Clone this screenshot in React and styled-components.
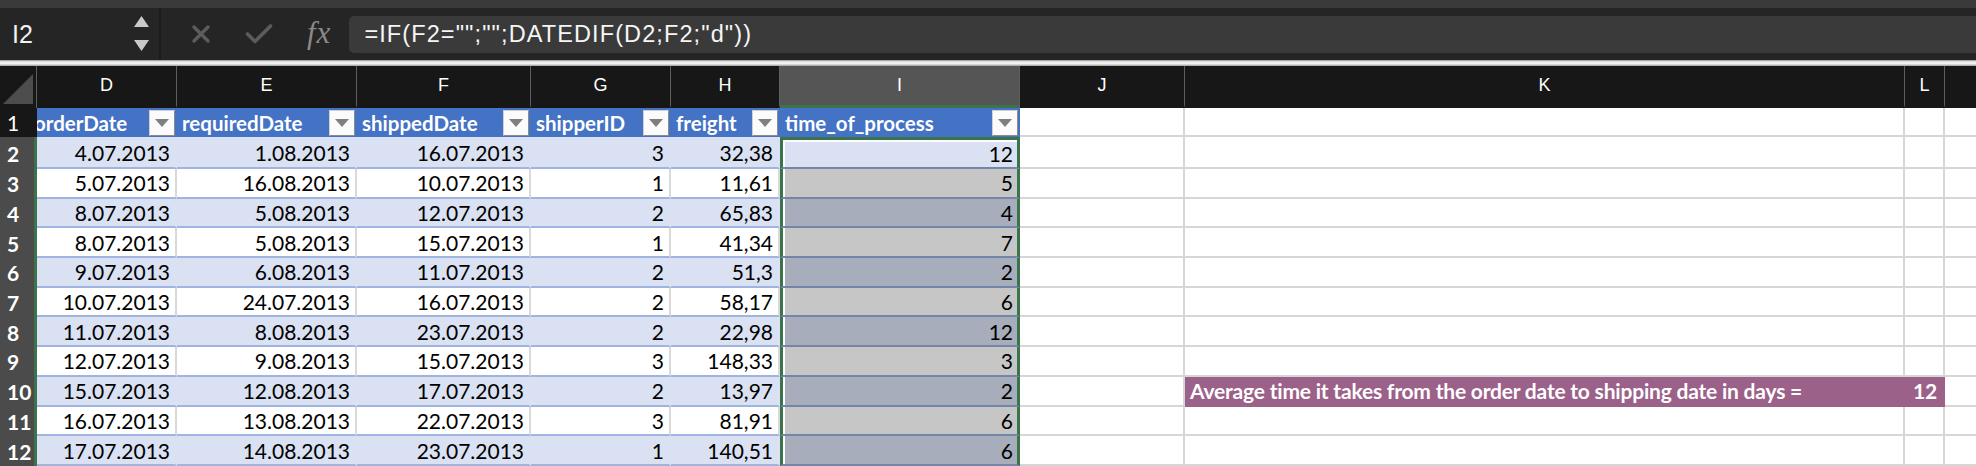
import React from 'react';
import styled, { createGlobalStyle } from 'styled-components';

const GlobalStyle = createGlobalStyle`
    html, body {
        margin: 0;
        padding: 0;
        background: #ffffff;
        overflow: hidden;
    }
`;

const COLUMNS = '37px 140px 180px 174px 140px 109px 240px 165px 720px 40px 120px';
const GREEN = '#3b744a';

const Window = styled.div`
    width: 1976px;
    height: 466px;
    overflow: hidden;
    font-family: Lato, "Open Sans", sans-serif;
`;

const Toolbar = styled.div`
    display: flex;
    align-items: stretch;
    height: 52px;
    background: #252525;
    border-top: 8px solid #3a3a3a;
`;

const NameBox = styled.div`
    display: flex;
    align-items: center;
    justify-content: space-between;
    width: 161px;
    padding: 0 10px 0 12px;
    box-sizing: border-box;
    border-right: 2px solid #1b1b1b;
    color: #f2f2f2;
    font-family: "Liberation Sans", Arial, sans-serif;
    font-size: 25px;
`;

const Actions = styled.div`
    display: flex;
    align-items: center;
    gap: 34px;
    padding: 0 18px 0 30px;
`;

const Fx = styled.span`
    font-family: "Liberation Serif", "Times New Roman", serif;
    font-style: italic;
    font-size: 31px;
    color: #8a8a8a;
    letter-spacing: 1px;
    margin-top: -3px;
`;

const FormulaInput = styled.div`
    flex: 1;
    display: flex;
    align-items: center;
    margin: 8px 0 7px 0;
    padding-left: 15px;
    background: #3a3a3a;
    border-radius: 5px 0 0 5px;
    color: #f6f6f6;
    font-family: "Liberation Sans", Arial, sans-serif;
    font-size: 23.5px;
    letter-spacing: 1.1px;
    white-space: pre;
`;

const Divider = styled.div`
    height: 6px;
    background: linear-gradient(#8c8c8c, #dcdcdc 25%, #fbfbfb 50%, #d6d6d6 75%, #9a9a9a);
`;

const Row = styled.div`
    display: grid;
    grid-template-columns: ${COLUMNS};
    height: ${p => p.$h}px;
`;

const Corner = styled.div`
    background: #171717;
    border-right: 1px solid #5e5e5e;
    display: flex;
    align-items: flex-end;
    justify-content: flex-end;
    padding: 0 3px 4px 0;
`;

const ColLetter = styled.div`
    display: flex;
    align-items: center;
    justify-content: center;
    background: ${p => (p.$active ? '#555555' : '#171717')};
    border-right: 1px solid #5e5e5e;
    border-bottom: 3px solid ${p => (p.$active ? GREEN : '#171717')};
    color: #ffffff;
    font-family: "Liberation Sans", Arial, sans-serif;
    font-size: 18px;
`;

const RowNum = styled.div`
    display: flex;
    align-items: center;
    padding-left: 7px;
    background: ${p => (p.$selected ? '#4b4b4b' : '#171717')};
    border-right: 3px solid ${p => (p.$selected ? GREEN : '#171717')};
    color: #ffffff;
    font-size: 21px;
    font-weight: ${p => (p.$selected ? 700 : 400)};
    box-sizing: border-box;
`;

const HeadCell = styled.div`
    display: flex;
    align-items: center;
    justify-content: space-between;
    overflow: hidden;
    background: #4472c4;
    color: #ffffff;
    font-size: 20.5px;
    font-weight: 700;
    padding-left: ${p => (p.$clipped ? 0 : 5)}px;
    text-indent: ${p => (p.$clipped ? -3 : 0)}px;
    white-space: nowrap;
`;

const FilterButton = styled.div`
    flex: none;
    display: flex;
    align-items: center;
    justify-content: center;
    width: 26px;
    height: 26px;
    margin-right: 2px;
    background: #fbfbfb;
    border: 1px solid #d0d0d0;
    border-right-color: #8b8b8b;
    border-bottom-color: #8b8b8b;
    box-sizing: border-box;
`;

const DataCell = styled.div`
    display: flex;
    align-items: center;
    justify-content: flex-end;
    padding-right: 5px;
    background: ${p => (p.$band ? '#d9e1f2' : '#ffffff')};
    border-right: 2px solid ${p => (p.$band ? '#d9e1f2' : '#d9d9d9')};
    border-bottom: 2px solid #9fb5df;
    color: #000000;
    font-size: 21px;
    box-sizing: border-box;
`;

const SelCell = styled.div`
    display: flex;
    align-items: center;
    justify-content: flex-end;
    padding-right: 4px;
    background: ${p => (p.$active ? '#d9e1f2' : p.$band ? '#a7adba' : '#c6c6c6')};
    border-left: 3px solid ${GREEN};
    border-right: 3px solid ${GREEN};
    border-top: ${p => (p.$active ? `3px solid ${GREEN}` : 'none')};
    border-bottom: 2px solid #7286aa;
    box-shadow: inset 2px 0 0 #ffffff${p => (p.$active ? ', inset 0 2px 0 #ffffff' : '')};
    color: #000000;
    font-size: 21px;
    box-sizing: border-box;
`;

const Blank = styled.div`
    display: flex;
    align-items: center;
    justify-content: ${p => (p.$right ? 'flex-end' : 'flex-start')};
    padding: 0 6px 0 5px;
    background: ${p => (p.$banner ? '#9b6189' : '#ffffff')};
    border-right: 2px solid ${p => (p.$banner ? '#9b6189' : '#d6d6d6')};
    border-bottom: 2px solid ${p => (p.$banner ? '#9b6189' : '#d6d6d6')};
    color: #ffffff;
    font-size: 21px;
    font-weight: 700;
    letter-spacing: -0.2px;
    white-space: nowrap;
    overflow: hidden;
    box-sizing: border-box;
`;

const Arrow = () => (
    <svg width="14" height="8" viewBox="0 0 14 8">
        <polygon points="0,0 14,0 7,8" fill="#7f7f7f" />
    </svg>
);

const Spinner = () => (
    <svg width="15" height="36" viewBox="0 0 15 36">
        <polygon points="7.5,0 15,11 0,11" fill="#c9c9c9" />
        <polygon points="0,24 15,24 7.5,35" fill="#c9c9c9" />
    </svg>
);

const CrossIcon = () => (
    <svg width="20" height="20" viewBox="0 0 20 20">
        <path d="M3 3 L17 17 M17 3 L3 17" stroke="#5c5c5c" strokeWidth="3.4" strokeLinecap="round" />
    </svg>
);

const CheckIcon = () => (
    <svg width="28" height="22" viewBox="0 0 28 22">
        <path d="M2.5 11 L10 18.5 L25.5 3" stroke="#5c5c5c" strokeWidth="3.6" fill="none" strokeLinecap="round" strokeLinejoin="round" />
    </svg>
);

const CornerMark = () => (
    <svg width="30" height="30" viewBox="0 0 30 30">
        <polygon points="30,0 30,30 0,30" fill="#4d4d4d" />
    </svg>
);

// M is scrolled off the right edge, so its letter is not shown
const letters = ['D', 'E', 'F', 'G', 'H', 'I', 'J', 'K', 'L', ''];
const headers = ['orderDate', 'requiredDate', 'shippedDate', 'shipperID', 'freight', 'time_of_process'];

const rows = [
    ['4.07.2013', '1.08.2013', '16.07.2013', '3', '32,38', '12'],
    ['5.07.2013', '16.08.2013', '10.07.2013', '1', '11,61', '5'],
    ['8.07.2013', '5.08.2013', '12.07.2013', '2', '65,83', '4'],
    ['8.07.2013', '5.08.2013', '15.07.2013', '1', '41,34', '7'],
    ['9.07.2013', '6.08.2013', '11.07.2013', '2', '51,3', '2'],
    ['10.07.2013', '24.07.2013', '16.07.2013', '2', '58,17', '6'],
    ['11.07.2013', '8.08.2013', '23.07.2013', '2', '22,98', '12'],
    ['12.07.2013', '9.08.2013', '15.07.2013', '3', '148,33', '3'],
    ['15.07.2013', '12.08.2013', '17.07.2013', '2', '13,97', '2'],
    ['16.07.2013', '13.08.2013', '22.07.2013', '3', '81,91', '6'],
    ['17.07.2013', '14.08.2013', '23.07.2013', '1', '140,51', '6'],
];

export default function App() {
    return (
        <Window>
            <GlobalStyle />
            <Toolbar>
                <NameBox>
                    <span>I2</span>
                    <Spinner />
                </NameBox>
                <Actions>
                    <CrossIcon />
                    <CheckIcon />
                    <Fx>fx</Fx>
                </Actions>
                <FormulaInput>{'=IF(F2="";"";DATEDIF(D2;F2;"d"))'}</FormulaInput>
            </Toolbar>
            <Divider />

            <Row $h={42}>
                <Corner><CornerMark /></Corner>
                {letters.map((l, i) => (
                    <ColLetter key={i} $active={l === 'I'}>{l}</ColLetter>
                ))}
            </Row>

            <Row $h={29}>
                <RowNum>1</RowNum>
                {headers.map((h, i) => (
                    <HeadCell key={h} $clipped={i === 0}>
                        <span>{h}</span>
                        <FilterButton><Arrow /></FilterButton>
                    </HeadCell>
                ))}
                <Blank />
                <Blank />
                <Blank />
                <Blank />
            </Row>

            {rows.map((r, i) => {
                const band = i % 2 === 0;
                const banner = i === 8;
                return (
                    <Row key={i} $h={i === 0 ? 32 : 29.7}>
                        <RowNum $selected>{i + 2}</RowNum>
                        {r.slice(0, 5).map((v, j) => (
                            <DataCell key={j} $band={band}>{v}</DataCell>
                        ))}
                        <SelCell $band={band} $active={i === 0}>{r[5]}</SelCell>
                        <Blank />
                        <Blank $banner={banner}>
                            {banner && 'Average time it takes from the order date to shipping date in days ='}
                        </Blank>
                        <Blank $banner={banner} $right>{banner && '12'}</Blank>
                        <Blank />
                    </Row>
                );
            })}
        </Window>
    );
}
